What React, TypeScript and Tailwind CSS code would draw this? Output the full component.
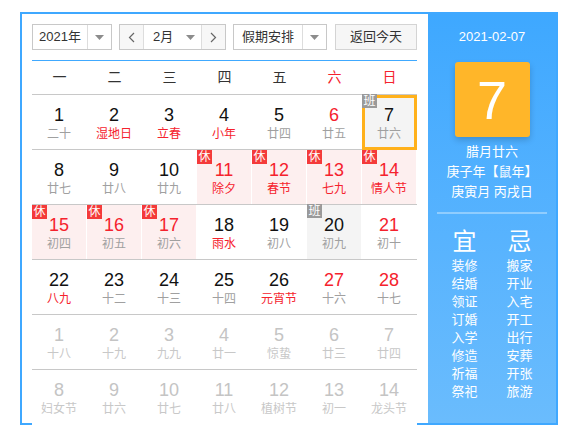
import React from "react"

type Day = {
  n: number
  lunar: string
  redNum?: boolean
  redLunar?: boolean
  rest?: boolean
  work?: boolean
  other?: boolean
  selected?: boolean
}

const weeks: Day[][] = [
  [
    { n: 1, lunar: "二十" },
    { n: 2, lunar: "湿地日", redLunar: true },
    { n: 3, lunar: "立春", redLunar: true },
    { n: 4, lunar: "小年", redLunar: true },
    { n: 5, lunar: "廿四" },
    { n: 6, lunar: "廿五", redNum: true },
    { n: 7, lunar: "廿六", work: true, selected: true },
  ],
  [
    { n: 8, lunar: "廿七" },
    { n: 9, lunar: "廿八" },
    { n: 10, lunar: "廿九" },
    { n: 11, lunar: "除夕", redNum: true, redLunar: true, rest: true },
    { n: 12, lunar: "春节", redNum: true, redLunar: true, rest: true },
    { n: 13, lunar: "七九", redNum: true, redLunar: true, rest: true },
    { n: 14, lunar: "情人节", redNum: true, redLunar: true, rest: true },
  ],
  [
    { n: 15, lunar: "初四", redNum: true, rest: true },
    { n: 16, lunar: "初五", redNum: true, rest: true },
    { n: 17, lunar: "初六", redNum: true, rest: true },
    { n: 18, lunar: "雨水", redLunar: true },
    { n: 19, lunar: "初八" },
    { n: 20, lunar: "初九", work: true },
    { n: 21, lunar: "初十", redNum: true },
  ],
  [
    { n: 22, lunar: "八九", redLunar: true },
    { n: 23, lunar: "十二" },
    { n: 24, lunar: "十三" },
    { n: 25, lunar: "十四" },
    { n: 26, lunar: "元宵节", redLunar: true },
    { n: 27, lunar: "十六", redNum: true },
    { n: 28, lunar: "十七", redNum: true },
  ],
  [
    { n: 1, lunar: "十八", other: true },
    { n: 2, lunar: "十九", other: true },
    { n: 3, lunar: "九九", other: true },
    { n: 4, lunar: "廿一", other: true },
    { n: 5, lunar: "惊蛰", other: true },
    { n: 6, lunar: "廿三", other: true },
    { n: 7, lunar: "廿四", other: true },
  ],
  [
    { n: 8, lunar: "妇女节", other: true },
    { n: 9, lunar: "廿六", other: true },
    { n: 10, lunar: "廿七", other: true },
    { n: 11, lunar: "廿八", other: true },
    { n: 12, lunar: "植树节", other: true },
    { n: 13, lunar: "初一", other: true },
    { n: 14, lunar: "龙头节", other: true },
  ],
]

const weekdays = ["一", "二", "三", "四", "五", "六", "日"]
const yi = ["装修", "结婚", "领证", "订婚", "入学", "修造", "祈福", "祭祀"]
const ji = ["搬家", "开业", "入宅", "开工", "出行", "安葬", "开张", "旅游"]

function Caret() {
  return (
    <svg width="9" height="5" viewBox="0 0 9 5">
      <path d="M0 0 L9 0 L4.5 5 Z" fill="#8c8c8c" />
    </svg>
  )
}

function Chevron({ dir }: { dir: "l" | "r" }) {
  return (
    <svg width="7" height="11" viewBox="0 0 7 11">
      <path
        d={dir === "l" ? "M6 1 L1.5 5.5 L6 10" : "M1 1 L5.5 5.5 L1 10"}
        fill="none"
        stroke="#666"
        strokeWidth="1.2"
      />
    </svg>
  )
}

function Cell({ d }: { d: Day }) {
  let numColor = d.redNum ? "text-[#f5222d]" : "text-[#111]"
  let lunarColor = d.redLunar ? "text-[#f5222d]" : "text-[#a0a0a0]"
  if (d.other) {
    numColor = "text-[#c4c4c4]"
    lunarColor = "text-[#c8c8c8]"
  }
  let bg = "bg-white"
  if (d.rest) bg = "bg-[#fdefef]"
  if (d.work) bg = "bg-[#f4f4f4]"

  return (
    <div className={`relative h-full border-r border-white text-center pt-[9px] ${bg}`}>
      {d.selected && <div className="absolute left-0 right-[-1px] top-0 bottom-[-1px] border-[3px] border-[#ffb11b]" />}
      {d.rest && (
        <div className="absolute left-0 top-0 w-[15px] h-[14px] bg-[#f43a3a] text-white text-[12px] leading-[14px] text-center">
          休
        </div>
      )}
      {d.work && (
        <div className="absolute left-0 top-[-1px] w-[15px] h-[14px] bg-[#9a9a9a] text-white text-[12px] leading-[14px] text-center">
          班
        </div>
      )}
      <div className={`relative text-[18px] leading-[22px] ${numColor}`}>{d.n}</div>
      <div className={`relative text-[12px] leading-[16px] ${lunarColor}`}>{d.lunar}</div>
    </div>
  )
}

export default function App() {
  return (
    <div className="pt-3 pl-5 font-['Liberation_Sans','Noto_Sans_CJK_SC',sans-serif]">
      <div className="flex w-[538px] h-[413px] border-2 border-[#3fa8ff] bg-white">
        {/* left: calendar */}
        <div className="w-[406px] pl-[10px] pr-[11px] pt-[10px]">
          <div className="flex items-center h-[26px] text-[13px] text-[#333]">
            <div className="flex h-full w-[80px] border border-[#c8c8c8] bg-white">
              <div className="flex-1 flex items-center justify-center">2021年</div>
              <div className="w-[24px] border-l border-[#ddd] flex items-center justify-center">
                <Caret />
              </div>
            </div>
            <div className="flex h-full w-[107px] ml-[7px] border border-[#c8c8c8]">
              <div className="w-[23px] bg-[#f7f7f7] flex items-center justify-center">
                <Chevron dir="l" />
              </div>
              <div className="flex-1 border-x border-[#ddd] bg-white flex items-center pl-[9px] pr-[6px]">
                <span className="flex-1">2月</span>
                <Caret />
              </div>
              <div className="w-[23px] bg-[#f7f7f7] flex items-center justify-center">
                <Chevron dir="r" />
              </div>
            </div>
            <div className="flex h-full w-[94px] ml-[7px] border border-[#c8c8c8] bg-white">
              <div className="flex-1 flex items-center justify-center">假期安排</div>
              <div className="w-[24px] border-l border-[#ddd] flex items-center justify-center">
                <Caret />
              </div>
            </div>
            <div className="h-full w-[82px] ml-[8px] border border-[#d4d4d4] bg-[#f6f6f6] flex items-center justify-center">
              返回今天
            </div>
          </div>

          <div className="mt-[10px] h-px bg-[#40a9ff]" />

          <div className="grid grid-cols-7 h-[34px] border-b border-[#c8c8c8] text-[14px] text-[#333] items-center text-center">
            {weekdays.map((w, i) => (
              <div key={w} className={i >= 5 ? "text-[#f5222d]" : ""}>
                {w}
              </div>
            ))}
          </div>

          {weeks.map((week, wi) => (
            <div
              key={wi}
              className={`grid grid-cols-7 h-[55px] ${wi < weeks.length - 1 ? "border-b border-[#c8c8c8]" : ""}`}
            >
              {week.map((d, di) => (
                <Cell key={di} d={d} />
              ))}
            </div>
          ))}
        </div>

        {/* right: day detail */}
        <div className="flex-1 bg-gradient-to-b from-[#3ea8ff] to-[#6abcfd] text-white flex flex-col items-center pt-[13px]">
          <div className="text-[13px] leading-[20px]">2021-02-07</div>
          <div className="mt-[15px] w-[75px] h-[75px] rounded-[3px] bg-[#ffb629] shadow-[0_3px_6px_rgba(0,0,0,0.18)] flex items-center justify-center text-[54px] leading-none">
            7
          </div>
          <div className="mt-[5px] text-[13px] leading-[20px] text-center">
            <div>腊月廿六</div>
            <div>庚子年【鼠年】</div>
            <div>庚寅月 丙戌日</div>
          </div>
          <div className="mt-[10px] w-[110px] h-[2px] bg-white/35" />
          <div className="mt-[13px] flex gap-[5px]">
            <div className="w-[50px] flex flex-col items-center">
              <div className="text-[24px] leading-[30px]">宜</div>
              {yi.map((t) => (
                <div key={t} className="text-[13px] leading-[18px]">
                  {t}
                </div>
              ))}
            </div>
            <div className="w-[50px] flex flex-col items-center">
              <div className="text-[24px] leading-[30px]">忌</div>
              {ji.map((t) => (
                <div key={t} className="text-[13px] leading-[18px]">
                  {t}
                </div>
              ))}
            </div>
          </div>
        </div>
      </div>
    </div>
  )
}
